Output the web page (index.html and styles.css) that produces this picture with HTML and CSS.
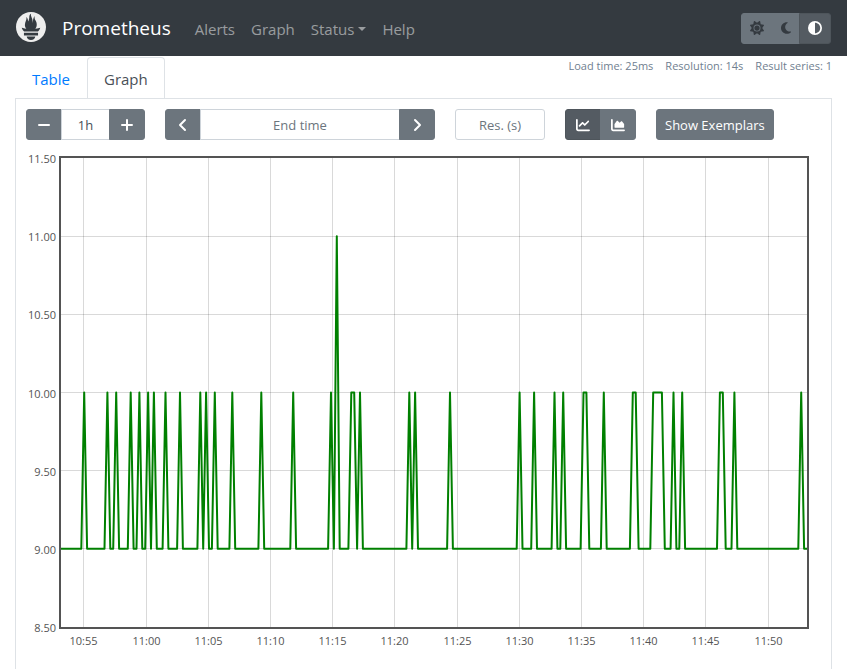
FILE: index.html
```html
<!DOCTYPE html>
<html lang="en">
<head>
  <meta charset="UTF-8">
  <meta name="viewport" content="width=device-width, initial-scale=1">
  <title>Prometheus</title>
  <link rel="stylesheet" href="styles.css">
</head>
<body>

<nav class="navbar">
  <a class="brand" href="#">
    <svg class="logo" viewBox="0 0 24 24" aria-hidden="true"><path d="M12 0C5.373 0 0 5.372 0 12c0 6.627 5.373 12 12 12s12-5.373 12-12c0-6.628-5.373-12-12-12zm0 22.46c-1.885 0-3.414-1.26-3.414-2.814h6.828c0 1.553-1.528 2.813-3.414 2.813zm5.64-3.745H6.36v-2.046h11.28v2.046zm-.04-3.098H6.391c-.037-.043-.075-.086-.111-.13-1.155-1.401-1.427-2.133-1.69-2.879-.005-.025 1.4.287 2.395.511 0 0 .513.119 1.262.255-.72-.843-1.147-1.915-1.147-3.01 0-2.406 1.845-4.508 1.18-6.207.648.053 1.34 1.367 1.387 3.422.689-.951.977-2.69.977-3.755 0-1.103.727-2.385 1.454-2.429-.648 1.069.168 1.984.894 4.256.272.854.237 2.29.447 3.201.07-1.892.395-4.652 1.595-5.605-.529 1.2.079 2.702.494 3.424.671 1.164 1.078 2.047 1.078 3.716a4.642 4.642 0 0 1-1.11 2.996c.792-.149 1.34-.283 1.34-.283l2.573-.502s-.374 1.538-1.81 3.019z"/></svg>
    <span>Prometheus</span>
  </a>
  <div class="nav-links">
    <a href="#">Alerts</a>
    <a href="#">Graph</a>
    <a class="dropdown" href="#">Status</a>
    <a href="#">Help</a>
  </div>
  <div class="group theme">
    <button class="btn" type="button" aria-label="Light theme"><svg class="icon" viewBox="0 0 512 512"><path d="M361.5 1.2c5 2.1 8.6 6.6 9.6 11.9L391 121l107.9 19.8c5.3 1 9.8 4.6 11.9 9.6s1.5 10.7-1.6 15.2L446.9 256l62.3 90.3c3.1 4.5 3.7 10.2 1.6 15.2s-6.6 8.6-11.9 9.6L391 391 371.1 498.9c-1 5.3-4.6 9.8-9.6 11.9s-10.7 1.5-15.2-1.6L256 446.9l-90.3 62.3c-4.5 3.1-10.2 3.7-15.2 1.6s-8.6-6.6-9.6-11.9L121 391 13.1 371.1c-5.3-1-9.8-4.6-11.9-9.6s-1.5-10.7 1.6-15.2L65.1 256 2.8 165.7c-3.1-4.5-3.7-10.2-1.6-15.2s6.6-8.6 11.9-9.6L121 121 140.9 13.1c1-5.3 4.6-9.8 9.6-11.9s10.7-1.5 15.2 1.6L256 65.1 346.3 2.8c4.5-3.1 10.2-3.7 15.2-1.6zM160 256a96 96 0 1 1 192 0 96 96 0 1 1 -192 0zm224 0a128 128 0 1 0 -256 0 128 128 0 1 0 256 0z"/></svg></button>
    <button class="btn" type="button" aria-label="Dark theme"><svg class="icon narrow" viewBox="0 0 384 512"><path d="M223.5 32C100 32 0 132.3 0 256S100 480 223.5 480c60.6 0 115.5-24.2 155.8-63.4c5-4.9 6.3-12.5 3.1-18.7s-10.1-9.7-17-8.5c-9.8 1.7-19.8 2.6-30.1 2.6c-96.9 0-175.5-78.8-175.5-176c0-65.8 36-123.1 89.3-153.3c6.1-3.5 9.2-10.5 7.7-17.3s-7.3-11.9-14.3-12.5c-6.3-.5-12.6-.8-19-.8z"/></svg></button>
    <button class="btn active" type="button" aria-label="Browser theme"><svg class="icon" viewBox="0 0 512 512"><path d="M448 256c0-106-86-192-192-192V448c106 0 192-86 192-192zM0 256a256 256 0 1 1 512 0A256 256 0 1 1 0 256z"/></svg></button>
  </div>
</nav>

<main class="content">
  <div class="panel-head">
    <div class="tabs">
      <a class="tab" href="#">Table</a>
      <a class="tab active" href="#">Graph</a>
    </div>
    <div class="stats">
      <span>Load time: 25ms</span>
      <span>Resolution: 14s</span>
      <span>Result series: 1</span>
    </div>
  </div>

  <section class="panel">
    <form class="controls">
      <div class="group">
        <button class="btn" type="button" aria-label="Shrink range"><svg class="icon" viewBox="0 0 14 14"><path class="line" d="M2 7h10"/></svg></button>
        <input class="range" type="text" value="1h" aria-label="Range">
        <button class="btn" type="button" aria-label="Expand range"><svg class="icon" viewBox="0 0 14 14"><path class="line" d="M2 7h10M7 2v10"/></svg></button>
      </div>
      <div class="group">
        <button class="btn" type="button" aria-label="Earlier"><svg class="icon" viewBox="0 0 14 14"><path class="line" d="M9 2L4 7l5 5"/></svg></button>
        <input class="endtime" type="text" placeholder="End time" aria-label="End time">
        <button class="btn" type="button" aria-label="Later"><svg class="icon" viewBox="0 0 14 14"><path class="line" d="M5 2l5 5-5 5"/></svg></button>
      </div>
      <input class="resolution" type="text" placeholder="Res. (s)" aria-label="Resolution in seconds">
      <div class="group">
        <button class="btn active" type="button" aria-label="Line chart"><svg class="icon" viewBox="0 0 512 512"><path d="M64 64c0-17.7-14.3-32-32-32S0 46.3 0 64V400c0 44.2 35.8 80 80 80H480c17.7 0 32-14.3 32-32s-14.3-32-32-32H80c-8.800 0-16-7.200-16-16V64zm406.600 86.600c12.500-12.500 12.500-32.800 0-45.300s-32.800-12.500-45.300 0L320 210.700l-57.400-57.400c-12.500-12.500-32.800-12.500-45.300 0l-112 112c-12.500 12.500-12.500 32.800 0 45.300s32.800 12.500 45.300 0L240 221.300l57.400 57.400c12.500 12.500 32.800 12.500 45.300 0l128-128z"/></svg></button>
        <button class="btn" type="button" aria-label="Stacked chart"><svg class="icon" viewBox="0 0 512 512"><path d="M64 64c0-17.700-14.300-32-32-32S0 46.300 0 64V400c0 44.200 35.800 80 80 80H480c17.700 0 32-14.300 32-32s-14.300-32-32-32H80c-8.800 0-16-7.200-16-16V64zM128 252v84c0 9 7 16 16 16H464c9 0 16-7 16-16V230c0-8-3-15-8-21l-65-78c-11-13-31-13-43-2l-39 36c-7 6-16 6-22 0l-49-53c-12-13-34-13-46 1l-72 98c-5 6-8 14-8 21z"/></svg></button>
      </div>
      <button class="btn exemplars" type="button">Show Exemplars</button>
    </form>
    <svg class="chart" id="chart" role="img" aria-label="Query result over time"></svg>
  </section>
</main>

<script src="chart.js"></script>
</body>
</html>
```
FILE: styles.css
```css
* { box-sizing: border-box; }

body {
  margin: 0;
  min-height: 100vh;
  display: flex;
  flex-direction: column;
  background: #fff;
  color: #212529;
  font-family: "Open Sans", "Noto Sans", sans-serif;
  font-size: 15px;
  line-height: 24px;
}

a { text-decoration: none; }

/* navbar */
.navbar {
  display: flex;
  align-items: center;
  height: 56px;
  padding: 0 16px;
  background: #343a40;
}
.brand {
  display: flex;
  align-items: center;
  gap: 16px;
  margin-right: 16px;
  color: #fff;
  font-size: 19px;
}
.logo {
  width: 30px;
  height: 30px;
  margin-bottom: 3px;
  fill: #eee;
}
.nav-links { display: flex; }
.nav-links a {
  padding: 9px 8px 7px;
  color: rgba(255, 255, 255, .5);
}
.dropdown::after {
  content: "";
  display: inline-block;
  margin-left: 4px;
  vertical-align: 4px;
  border-top: 4px solid;
  border-left: 4px solid transparent;
  border-right: 4px solid transparent;
}
.theme { margin-left: auto; }
.theme .btn {
  padding: 0 8px;
  color: #343a40;
}
.theme .btn.active { color: #fff; }

/* buttons and inputs */
.group { display: flex; }
.btn {
  display: flex;
  align-items: center;
  justify-content: center;
  height: 31px;
  padding: 0 10px;
  border: 1px solid #6c757d;
  border-radius: 3px;
  background: #6c757d;
  color: #fff;
  font: inherit;
  font-size: 13px;
  cursor: pointer;
}
.btn.active {
  background: #545b62;
  border-color: #4e555b;
}
.group > * { border-radius: 0; }
.group > * + * { margin-left: -1px; }
.group > :first-child { border-radius: 3px 0 0 3px; }
.group > :last-child { border-radius: 0 3px 3px 0; }
.icon {
  width: 14px;
  height: 14px;
  fill: currentColor;
}
.icon.narrow { width: 10px; }
.line {
  fill: none;
  stroke: currentColor;
  stroke-width: 2;
  stroke-linecap: round;
  stroke-linejoin: round;
}
input {
  height: 31px;
  min-width: 0;
  padding: 4px 8px;
  border: 1px solid #ced4da;
  border-radius: 3px;
  background: #fff;
  color: #495057;
  font: inherit;
  font-size: 13px;
  text-align: center;
}
input::placeholder {
  color: #6c757d;
  opacity: 1;
}
.range { width: 49px; }
.endtime { width: 200px; }
.resolution { width: 90px; }

/* tabs */
.content {
  flex: 1;
  display: flex;
  flex-direction: column;
  padding: 1px 15px 0;
}
.panel-head {
  display: flex;
  justify-content: space-between;
  align-items: flex-start;
}
.tabs {
  display: flex;
  margin-bottom: -1px;
}
.tab {
  padding: 9px 16px 7px;
  border: 1px solid transparent;
  border-radius: 4px 4px 0 0;
  color: #007bff;
}
.tab.active {
  border-color: #dee2e6 #dee2e6 #fff;
  background: #fff;
  color: #495057;
}
.stats {
  display: flex;
  gap: 12px;
  color: #708090;
  font-size: 11px;
  line-height: 18px;
}

/* graph panel */
.panel {
  flex: 1;
  padding: 10px;
  border: 1px solid #dee2e6;
  border-bottom: 0;
}
.controls {
  display: flex;
  flex-wrap: wrap;
  gap: 20px;
}
.exemplars { padding: 0 8px; }

.chart {
  display: block;
  width: 100%;
  height: 500px;
  margin-top: 16px;
  font-size: 11px;
  overflow: visible;
}
.chart text { fill: #545454; }
.frame {
  fill: none;
  stroke: #545454;
  stroke-width: 2;
}
.grid {
  stroke: #000;
  stroke-opacity: .15;
}
.series {
  fill: none;
  stroke: #008000;
  stroke-width: 2;
  stroke-linejoin: round;
}
```
FILE: chart.js
```js
const STEP = 14;      // seconds between samples
const SAMPLES = 258;
const YMIN = 8.5, YMAX = 11.5;
const FIRST_TICK = 110; // seconds from the left edge to 10:55

// sample indexes where the value is above the base of 9
const tens = [8, 16, 19, 24, 27, 30, 32, 36, 41, 48, 50, 53, 59, 69, 80, 93,
  100, 101, 103, 120, 122, 134, 158, 163, 170, 173, 180, 181, 187, 197, 198,
  204, 205, 206, 207, 211, 214, 227, 228, 232, 255];
const values = new Array(SAMPLES).fill(9);
tens.forEach(i => values[i] = 10);
values[95] = 11;

const chart = document.getElementById("chart");

function add(name, attrs, text) {
  const el = document.createElementNS("http://www.w3.org/2000/svg", name);
  for (const key in attrs) el.setAttribute(key, attrs[key]);
  if (text) el.textContent = text;
  chart.appendChild(el);
}

function draw() {
  chart.replaceChildren();
  const left = 35, top = 2, bottom = 471;
  const right = chart.clientWidth - 14;
  const x = s => left + s / (STEP * (SAMPLES - 1)) * (right - left);
  const y = v => bottom - (v - YMIN) / (YMAX - YMIN) * (bottom - top);

  for (let v = YMIN; v <= YMAX; v += 0.5) {
    const py = Math.floor(y(v)) + 0.5;
    if (v > YMIN && v < YMAX) add("line", { class: "grid", x1: left, x2: right, y1: py, y2: py });
    add("text", { x: left - 5, y: Math.round(y(v)) + 5, "text-anchor": "end" }, v.toFixed(2));
  }

  for (let i = 0; i < 12; i++) {
    const px = Math.floor(x(FIRST_TICK + i * 300)) + 0.5;
    const min = 10 * 60 + 55 + i * 5;
    const label = Math.floor(min / 60) + ":" + String(min % 60).padStart(2, "0");
    add("line", { class: "grid", x1: px, x2: px, y1: top, y2: bottom });
    add("text", { x: px, y: bottom + 18, "text-anchor": "middle" }, label);
  }

  const points = values.map((v, i) => x(i * STEP).toFixed(1) + "," + y(v).toFixed(1));
  add("polyline", { class: "series", points: points.join(" ") });
  add("rect", { class: "frame", x: left - 1, y: top - 1, width: right - left + 2, height: bottom - top + 2 });
}

draw();
window.addEventListener("resize", draw);
```
